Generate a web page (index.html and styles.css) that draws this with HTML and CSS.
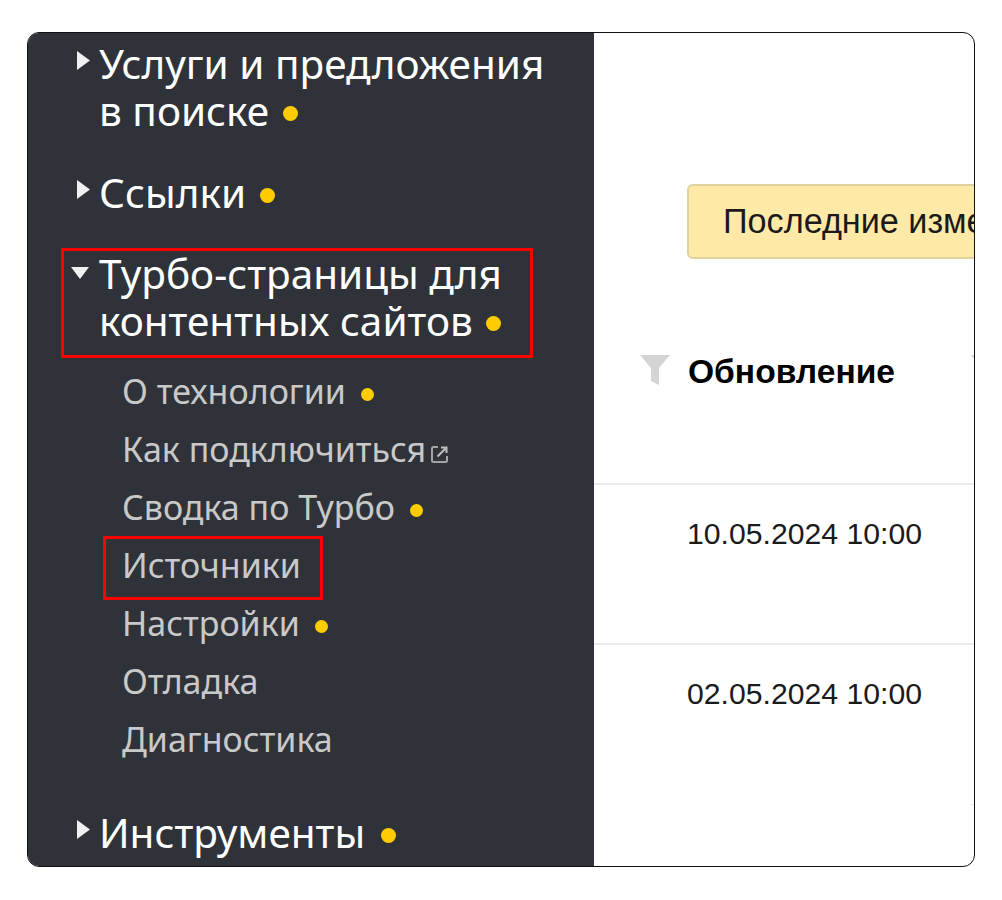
FILE: index.html
```html
<!DOCTYPE html>
<html lang="ru">
<head>
<meta charset="utf-8">
<title>Турбо-страницы</title>
<link rel="stylesheet" href="styles.css">
</head>
<body>
<div class="frame">
  <nav class="side">
    <div class="group first">
      <div class="head"><svg class="arrow" viewBox="0 0 13 19"><path d="M0 0L13 9.500L0 19Z"/></svg><span class="title">Услуги и предложения<br>в поиске <i class="dot"></i></span></div>
    </div>
    <div class="group">
      <div class="head"><svg class="arrow" viewBox="0 0 13 19"><path d="M0 0L13 9.500L0 19Z"/></svg><span class="title">Ссылки <i class="dot"></i></span></div>
    </div>
    <div class="group turbo">
      <div class="head hl"><svg class="arrow down" viewBox="0 0 18 12"><path d="M0 0H18L9 12Z"/></svg><span class="title">Турбо-страницы для<br>контентных сайтов <i class="dot"></i></span></div>
      <ul class="sub">
        <li>О технологии <i class="dot small"></i></li>
        <li>Как подключиться <svg class="ext" viewBox="0 0 19 19"><path d="M8 2H3.500A1.500 1.500 0 0 0 2 3.500V15.500A1.500 1.500 0 0 0 3.500 17H15.500A1.500 1.500 0 0 0 17 15.500V11"/><path class="ext-arrow" d="M7.500 11.500L15.500 3.500M11 2.500H16.500V8"/></svg></li>
        <li>Сводка по Турбо <i class="dot small"></i></li>
        <li><span class="boxed">Источники</span></li>
        <li>Настройки <i class="dot small"></i></li>
        <li>Отладка</li>
        <li>Диагностика</li>
      </ul>
    </div>
    <div class="group last">
      <div class="head"><svg class="arrow" viewBox="0 0 13 19"><path d="M0 0L13 9.500L0 19Z"/></svg><span class="title">Инструменты <i class="dot wide"></i></span></div>
    </div>
  </nav>
  <main class="main">
    <div class="notice">Последние изменения</div>
    <div class="row headrow"><svg class="funnel" viewBox="0 0 30 30"><path d="M0 0H30L19 13V30L11 26V13Z"/></svg><b class="col-title">Обновление</b><svg class="funnel next" viewBox="0 0 30 30"><path d="M0 0H30L19 13V30L11 26V13Z"/></svg></div>
    <div class="row data">10.05.2024 10:00</div>
    <div class="row data tail">02.05.2024 10:00</div>
  </main>
</div>
</body>
</html>
```
FILE: styles.css
```css
*, *::after { box-sizing: border-box; }
html, body { margin: 0; padding: 0; background: #fff; }
body { padding: 32px 27px 0 27px; }
.frame {
  display: flex;
  width: 948px;
  height: 835px;
  border: 1.5px solid #111;
  border-radius: 12px;
  overflow: hidden;
}
.side {
  width: 566px;
  flex: none;
  background: #2f3339;
  padding: 7px 0 0 49px;
  font-family: "Noto Sans", sans-serif;
}
.group { margin-top: 35px; }
.group.first { margin-top: 0; }
.group.turbo { margin-top: 34px; }
.group.last { margin-top: 41px; }
.head { position: relative; padding-left: 22px; color: #fff; }
.title { display: block; font-size: 40.500px; line-height: 47px; white-space: nowrap; }
.arrow { position: absolute; left: 0; top: 11px; width: 13px; height: 19px; fill: #f0f0f0; }
.arrow.down { left: -6px; top: 17px; width: 18px; height: 12px; }
.hl::after {
  content: "";
  position: absolute;
  left: -16px;
  top: -2px;
  width: 472px;
  height: 110px;
  border: 3px solid #f00;
}
.dot { display: inline-block; width: 15px; height: 15px; margin-left: 3px; border-radius: 50%; background: #fc0; vertical-align: 5px; }
.dot.wide { margin-left: 5px; }
.dot.small { width: 13px; height: 13px; margin-left: 6px; vertical-align: 3px; }
.sub { list-style: none; margin: 18px 0 0; padding: 0 0 0 45px; color: #c9c9c9; font-size: 34px; line-height: 58px; white-space: nowrap; }
.boxed { position: relative; display: inline-block; }
.boxed::after {
  content: "";
  position: absolute;
  left: -19px;
  top: 0;
  width: 220px;
  height: 64px;
  border: 3px solid #f00;
}
.ext { width: 19px; height: 19px; margin-left: -5px; fill: none; stroke: #a3a3a3; stroke-width: 2; vertical-align: -2px; }
.ext-arrow { stroke: #bdbdbd; }
.main {
  flex: 1;
  min-width: 0;
  overflow: hidden;
  font-family: "Liberation Sans", sans-serif;
  color: #1a1a1a;
  font-size: 30.200px;
}
.notice {
  margin: 151px 0 0 93px;
  height: 75px;
  width: 500px;
  padding: 16px 0 0 34px;
  background: #ffe9a6;
  border: 2px solid #e0d29c;
  border-radius: 6px;
  font-size: 34.200px;
  white-space: nowrap;
}
.row { height: 160px; border-bottom: 2px solid #ebebeb; padding-left: 93px; }
.headrow { display: flex; height: 226px; align-items: flex-start; padding: 94px 0 0 46px; }
.funnel { flex: none; width: 30px; height: 30px; fill: #d4d4d4; margin: 2px 18px 0 0; }
.funnel.next { margin: 2px 0 0 76px; }
.col-title { font-size: 33.600px; color: #000; white-space: nowrap; }
.data { padding-top: 32px; }
.tail { position: relative; border-bottom: 0; }
.tail::after {
  content: "";
  position: absolute;
  right: 0;
  bottom: 0;
  width: 3px;
  height: 1px;
  background: #e5e5e5;
}
```
